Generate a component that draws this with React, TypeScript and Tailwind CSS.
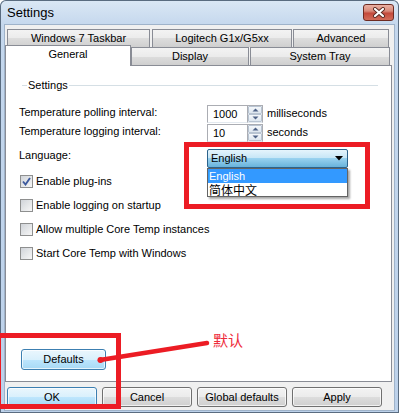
import React from "react";

// Win7-ish gradients
const grayGrad = "bg-[linear-gradient(#f3f3f3,#ebebeb_50%,#dddddd_50%,#cfcfcf)]";
const blueGrad = "bg-[linear-gradient(#eaf6fd,#d9f0fc_50%,#bee6fd_50%,#a7d9f5)]";

function Tab({ className, children }: { className: string; children: React.ReactNode }) {
  return (
    <div
      className={`flex h-[18px] items-center justify-center border border-b-0 border-[#898c95] ${grayGrad} ${className}`}
    >
      {children}
    </div>
  );
}

function SpinArrow({ up }: { up?: boolean }) {
  return (
    <div className="flex h-[8px] items-center justify-center rounded-[1px] border border-[#b8c4d2] bg-[linear-gradient(#f5f8fb,#dde6ef)]">
      <svg width="7" height="4" viewBox="0 0 7 4">
        <path d={up ? "M0.5 3.5 L3.5 0.5 L6.5 3.5 Z" : "M0.5 0.5 L3.5 3.5 L6.5 0.5 Z"} fill="#4d6185" />
      </svg>
    </div>
  );
}

function Spin({ value }: { value: string }) {
  return (
    <div className="flex h-[18px]">
      <div className="flex h-full w-[40px] items-center border border-r-0 border-[#abadb3] border-b-[#e3e9ef] bg-white pl-[5px]">
        {value}
      </div>
      <div className="flex h-full w-[16px] flex-col gap-0 border border-[#abadb3] border-b-[#e3e9ef] bg-white">
        <SpinArrow up />
        <SpinArrow />
      </div>
    </div>
  );
}

function Check({ checked, label }: { checked?: boolean; label: string }) {
  return (
    <div className="flex h-[24px] items-center">
      <div className="ml-px flex h-[13px] w-[13px] items-center justify-center border border-[#8e8f8f] bg-[linear-gradient(135deg,#d0d4d9,#f7f7f7)]">
        {checked && (
          <svg width="9" height="9" viewBox="0 0 9 9">
            <path d="M1 4.5 L3.5 7.5 L8 1" fill="none" stroke="#3d5a9e" strokeWidth="1.9" />
          </svg>
        )}
      </div>
      <span className="ml-[3px]">{label}</span>
    </div>
  );
}

function Button({ blue, className, children }: { blue?: boolean; className: string; children: React.ReactNode }) {
  return (
    <div
      className={`flex items-center justify-center rounded-[3px] border shadow-[inset_0_0_0_1px_rgba(255,255,255,0.7)] ${
        blue ? `border-[#3c7fb1] ${blueGrad}` : `border-[#707070] ${grayGrad}`
      } ${className}`}
    >
      {children}
    </div>
  );
}

export default function App() {
  return (
    <div className="relative h-[413px] w-[399px] overflow-hidden rounded-t-[6px] bg-[linear-gradient(#dbe8f5,#c4d7ed_26px,#bcd1ea)] font-['Liberation_Sans',Arial,sans-serif] text-[11px] leading-[13px] text-black shadow-[inset_0_0_0_1px_#5a6c80]">
      {/* title bar */}
      <div className="flex h-[25px] items-center pl-[7px] pr-[5px]">
        <span className="text-[13px]">Settings</span>
        <div className="ml-auto flex h-[17px] w-[31px] items-center justify-center rounded-[3px] border border-[#6d2b22] bg-[linear-gradient(#eab0a3,#d98b7b_40%,#c44a3c_55%,#d36d5a)]">
          <svg width="14" height="11" viewBox="0 0 14 11">
            <path d="M3 2 L11 9 M11 2 L3 9" stroke="#5b2b24" strokeWidth="4" strokeLinecap="round" />
            <path d="M3 2 L11 9 M11 2 L3 9" stroke="#ffffff" strokeWidth="2.2" strokeLinecap="round" />
          </svg>
        </div>
      </div>

      {/* client area */}
      <div className="ml-[5px] h-[385px] w-[389px] bg-[#f0f0f0] pt-[4px] outline outline-1 outline-[#9fb3ca]">
        {/* tab rows */}
        <div className="flex pl-[2px]">
          <Tab className="w-[143px]">Windows 7 Taskbar</Tab>
          <Tab className="ml-[2px] w-[140px]">Logitech G1x/G5xx</Tab>
          <Tab className="ml-px w-[96px]">Advanced</Tab>
        </div>
        <div className="flex h-[18px] items-end">
          <div className="relative z-10 -mb-px flex h-[21px] w-[126px] justify-center border border-b-0 border-[#898c95] bg-white pt-[2px]">
            General
          </div>
          <Tab className="w-[118px]">Display</Tab>
          <Tab className="ml-px w-[140px]">System Tray</Tab>
        </div>

        {/* tab panel */}
        <div className="flex h-[317px] w-[387px] flex-col border border-[#898c95] bg-white pl-[13px]">
          <div className="ml-[3px] mr-[13px] mt-[12px] flex h-[14px] items-center">
            <span className="h-px w-[5px] bg-[#d5dfe5]" />
            <span className="px-[1px] leading-[14px]">Settings</span>
            <span className="h-px flex-1 bg-[#d5dfe5]" />
          </div>

          <div className="mt-[13px] flex h-[19px] items-start">
            <span className="w-[188px] leading-[14px]">Temperature polling interval:</span>
            <Spin value="1000" />
            <span className="ml-[4px] leading-[16px]">milliseconds</span>
          </div>
          <div className="flex h-[19px] items-start">
            <span className="w-[188px] leading-[14px]">Temperature logging interval:</span>
            <Spin value="10" />
            <span className="ml-[4px] leading-[16px]">seconds</span>
          </div>

          <div className="mt-[6px] flex h-[19px] items-start">
            <span className="w-[188px] leading-[13px]">Language:</span>
            <div className="flex h-[19px] w-[141px] items-center rounded-[2px] border border-[#2c628b] bg-[linear-gradient(#e5f4fc,#c4e5f6_50%,#98d1ef_50%,#68b3db)] pl-[3px] pr-[4px]">
              <span>English</span>
              <svg className="ml-auto" width="8" height="5" viewBox="0 0 8 5">
                <path d="M0 0 L8 0 L4 4.5 Z" fill="#000" />
              </svg>
            </div>
          </div>

          <div className="mt-px">
            <Check checked label="Enable plug-ins" />
            <Check label="Enable logging on startup" />
            <Check label="Allow multiple Core Temp instances" />
            <Check label="Start Core Temp with Windows" />
          </div>

          <Button blue className="mb-[11px] ml-[2px] mt-auto h-[21px] w-[85px]">
            Defaults
          </Button>
        </div>

        {/* dialog buttons */}
        <div className="mt-[5px] flex gap-[5px] pl-[2px]">
          <Button blue className="h-[20px] w-[90px]">OK</Button>
          <Button className="h-[20px] w-[90px]">Cancel</Button>
          <Button className="h-[20px] w-[90px]">Global defaults</Button>
          <Button className="h-[20px] w-[90px]">Apply</Button>
        </div>
      </div>

      {/* open language list */}
      <div className="absolute left-[207px] top-[168px] w-[141px] border border-[#646464] bg-white shadow-[2px_2px_2px_rgba(0,0,0,0.35)]">
        <div className="h-[14px] bg-[#3399ff] pl-[1px] leading-[14px] text-white">English</div>
        <div className="h-[13px] pl-[1px] font-['Noto_Sans_CJK_SC',sans-serif] text-[12px] leading-[13px]">简体中文</div>
      </div>

      {/* red annotations */}
      <div className="absolute left-[184px] top-[142px] h-[67px] w-[186px] border-[5px] border-[#ec1c24]" />
      <div className="absolute left-[-4px] top-[333px] h-[76px] w-[125px] border-[5px] border-[#ec1c24]" />
      <svg className="absolute left-[95px] top-[336px]" width="120" height="30" viewBox="0 0 120 30">
        <path d="M5 24 L112 7" stroke="#ec1c24" strokeWidth="4.5" strokeLinecap="round" />
        <circle cx="5.5" cy="24" r="3" fill="#ec1c24" />
      </svg>
      <span className="absolute left-[213px] top-[331px] font-['Noto_Sans_CJK_SC',sans-serif] text-[15px] leading-[18px] text-[#ee2a3a]">
        默认
      </span>
    </div>
  );
}
